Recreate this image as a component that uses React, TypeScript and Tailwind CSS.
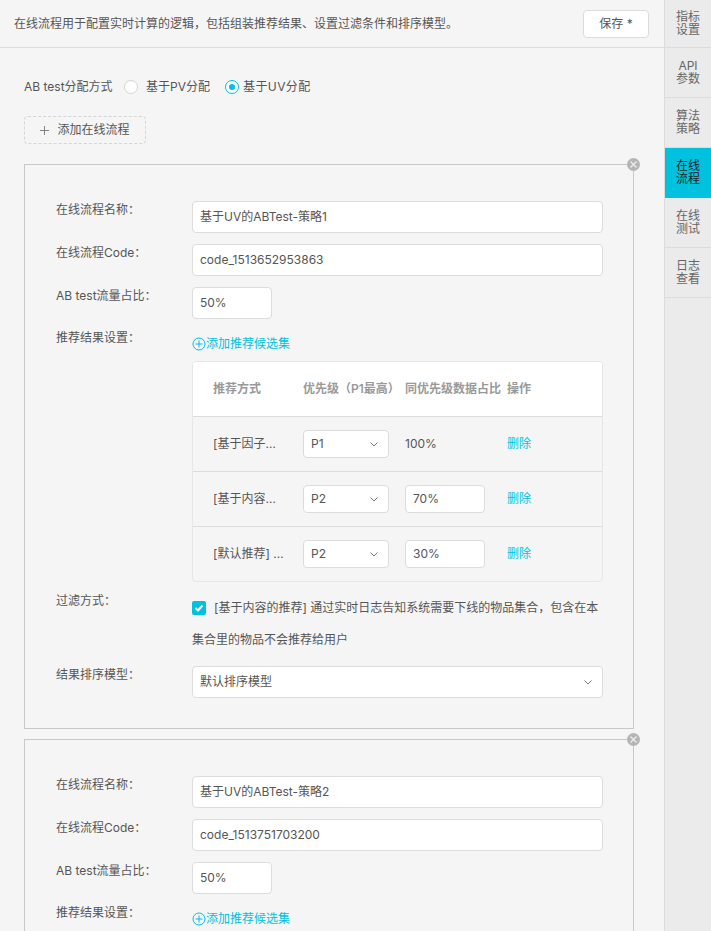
import React from "react";

const Chevron = ({ className = "" }: { className?: string }) => (
  <svg viewBox="0 0 8 5" className={"w-2 h-[5px] " + className} fill="none" stroke="#777" strokeWidth="1">
    <path d="M0.5 0.5l3.5 3.5 3.5-3.5" />
  </svg>
);

const Input = ({ value, className = "" }: { value: string; className?: string }) => (
  <div className={"h-8 bg-white border border-[#dcdcdc] rounded-[4px] px-[7px] flex items-center text-[12px] text-[#555] " + className}>{value}</div>
);

const Select = ({ value, className = "" }: { value: string; className?: string }) => (
  <div className={"h-7 bg-white border border-[#dcdcdc] rounded-[4px] pl-[7px] pr-[10px] flex items-center justify-between text-[12px] text-[#555] " + className}>
    <span>{value}</span>
    <Chevron />
  </div>
);

const Row = ({ label, children, h }: { label: string; children: React.ReactNode; h: string }) => (
  <div className={"flex " + h}>
    <div className="w-[136px] shrink-0 text-[12px] leading-[18px] text-[#555]">{label}</div>
    <div className="w-[411px]">{children}</div>
  </div>
);

const CloseBadge = () => (
  <div className="absolute -top-[7px] -right-[7px] w-[13px] h-[13px] rounded-full bg-[#b5b5b5] flex items-center justify-center">
    <svg viewBox="0 0 9 9" className="w-[9px] h-[9px]" stroke="#eee" strokeWidth="1.2"><path d="M1.5 1.5l6 6M7.5 1.5l-6 6" /></svg>
  </div>
);

const AddLink = () => (
  <div className="flex items-center text-[12px] text-[#00c1de] h-[18px]">
    <svg viewBox="0 0 14 14" className="w-[14px] h-[14px]" fill="none" stroke="#00c1de" strokeWidth="1">
      <circle cx="7" cy="7" r="6" /><path d="M7 3.5v7M3.5 7h7" />
    </svg>
    添加推荐候选集
  </div>
);

const tableRows = [
  { n: "[基于因子…", p: "P1", v: "" },
  { n: "[基于内容…", p: "P2", v: "70%" },
  { n: "[默认推荐] …", p: "P2", v: "30%" },
];

const Table = () => (
  <div className="mt-2 border border-[#e6e6e6] rounded-[4px] overflow-hidden text-[12px]">
    <div className="h-[55px] bg-white border-b border-[#dcdcdc] flex items-center font-semibold text-[#999]">
      <div className="w-[110px] pl-5 shrink-0">推荐方式</div>
      <div className="w-[102px] shrink-0 whitespace-nowrap">优先级（P1最高）</div>
      <div className="w-[102px] shrink-0 whitespace-nowrap">同优先级数据占比</div>
      <div>操作</div>
    </div>
    {tableRows.map((r, i) => (
      <div key={i} className={"flex items-center text-[#555] " + (i < 2 ? "h-[55px] border-b border-[#dcdcdc]" : "h-[54px]")}>
        <div className="w-[110px] pl-5 shrink-0 whitespace-nowrap">{r.n}</div>
        <div className="w-[102px] shrink-0"><Select value={r.p} className="w-[86px]" /></div>
        <div className="w-[102px] shrink-0">
          {r.v ? <div className="w-[80px] h-7 bg-white border border-[#dcdcdc] rounded-[4px] px-[7px] flex items-center">{r.v}</div> : "100%"}
        </div>
        <div className="text-[#00c1de]">删除</div>
      </div>
    ))}
  </div>
);

const Card = ({ name, code, full }: { name: string; code: string; full?: boolean }) => (
  <div className={"relative border border-[#c8c8c8] w-[610px] pl-[31px] pt-[36px] " + (full ? "h-[565px] mb-[10px]" : "h-[300px]")}>
    <CloseBadge />
    <Row label="在线流程名称：" h="h-[43px]"><Input value={name} /></Row>
    <Row label="在线流程Code：" h="h-[43px]"><Input value={code} /></Row>
    <Row label="AB test流量占比：" h="h-[42px]"><Input value="50%" className="w-20" /></Row>
    <Row label="推荐结果设置：" h={full ? "h-[263px]" : "h-[40px]"}>
      <div className="pt-[6px]"><AddLink /></div>
      {full && <Table />}
    </Row>
    {full && (
      <>
        <Row label="过滤方式：" h="h-[74px]">
          <div className="text-[12px] leading-[32px] text-[#555]">
            <span className="inline-flex w-[14px] h-[14px] rounded-[2px] bg-[#00c1de] items-center justify-center align-[-3px] mr-2">
              <svg viewBox="0 0 14 14" className="w-[14px] h-[14px]" fill="none" stroke="#fff" strokeWidth="2"><path d="M3.5 7l2.5 2.5 4.5-5" /></svg>
            </span>
            [基于内容的推荐] 通过实时日志告知系统需要下线的物品集合，包含在本集合里的物品不会推荐给用户
          </div>
        </Row>
        <Row label="结果排序模型：" h="h-8">
          <Select value="默认排序模型" className="!h-8" />
        </Row>
      </>
    )}
  </div>
);

const nav = [
  ["指标", "设置"],
  ["API", "参数"],
  ["算法", "策略"],
  ["在线", "流程"],
  ["在线", "测试"],
  ["日志", "查看"],
];

export default function App() {
  return (
    <div className="flex h-[931px] w-[711px] overflow-hidden bg-[#f5f5f5]" style={{ fontFamily: '"Inter","Noto Sans CJK SC",sans-serif' }}>
      <div className="w-[664px] shrink-0">
        <div className="h-[48px] border-b border-[#dcdcdc] flex items-center justify-between pl-[14px] pr-[15px]">
          <div className="text-[12px] text-[#555] whitespace-nowrap">在线流程用于配置实时计算的逻辑，包括组装推荐结果、设置过滤条件和排序模型。</div>
          <div className="w-[66px] h-7 bg-white border border-[#dcdcdc] rounded-[4px] flex items-center justify-center text-[12px] text-[#555]">保存 *</div>
        </div>
        <div className="pl-6 pt-[30px]">
          <div className="flex items-center h-[18px] text-[12px] text-[#555]">
            <span className="w-[100px] whitespace-nowrap">AB test分配方式</span>
            <span className="w-[14px] h-[14px] rounded-full bg-white border border-[#d5d5d5]" />
            <span className="ml-2 w-[79px] whitespace-nowrap">基于PV分配</span>
            <span className="w-[14px] h-[14px] rounded-full bg-white border border-[#00c1de] flex items-center justify-center">
              <span className="w-[6px] h-[6px] rounded-full bg-[#00c1de]" />
            </span>
            <span className="ml-1 tracking-[0.4px]">基于UV分配</span>
          </div>
          <div className="mt-[20px] w-[122px] h-7 border border-dashed border-[#d5d5d5] rounded-[4px] flex items-center justify-center text-[12px] text-[#555]">
            <svg viewBox="0 0 10 10" className="w-[9px] h-[9px] mr-2" stroke="#777" strokeWidth="1"><path d="M5 0v10M0 5h10" /></svg>
            添加在线流程
          </div>
          <div className="mt-[20px]">
            <Card name="基于UV的ABTest-策略1" code="code_1513652953863" full />
            <Card name="基于UV的ABTest-策略2" code="code_1513751703200" />
          </div>
        </div>
      </div>
      <div className="w-[47px] shrink-0 bg-[#ebebeb] border-l border-[#dcdcdc]">
        {nav.map((n, i) => (
          <div key={i} className={"flex items-center justify-center text-center text-[12px] leading-[13px] pb-px border-b " + (i === 0 ? "h-[48px] " : "h-[50px] ") + (i === 3 ? "bg-[#00c1de] text-[#222] border-[#00c1de]" : "text-[#666] border-[#dcdcdc]")}>
            <div>{n[0]}<br />{n[1]}</div>
          </div>
        ))}
      </div>
    </div>
  );
}
